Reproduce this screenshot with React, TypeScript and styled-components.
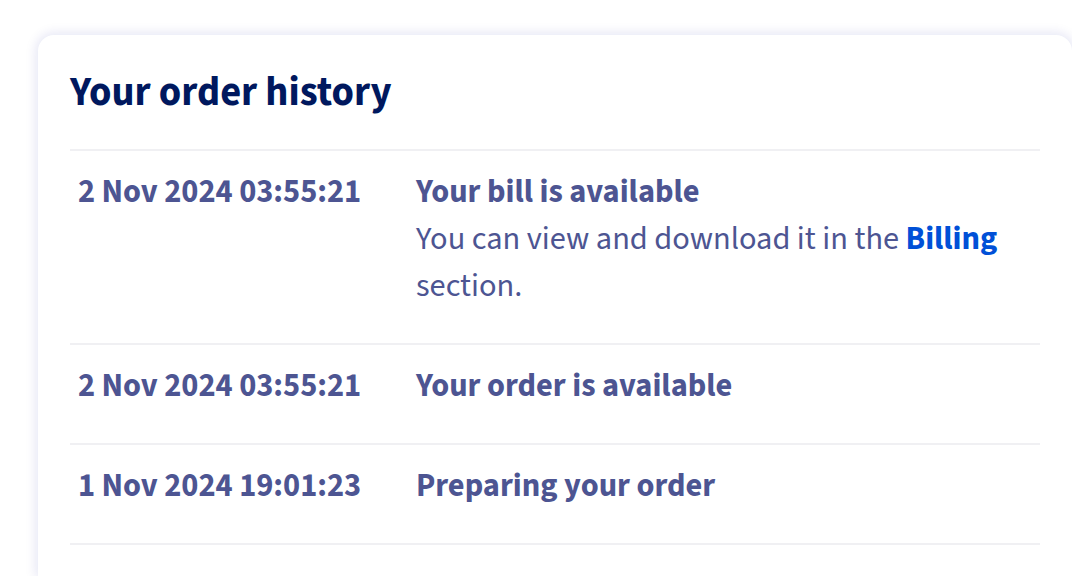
import React from "react";
import styled, { createGlobalStyle } from "styled-components";

const GlobalStyle = createGlobalStyle`
  html, body {
    margin: 0;
    padding: 0;
    background: #ffffff;
    overflow: hidden;
  }
  body {
    font-family: "Source Sans 3", "Open Sans", "Liberation Sans", sans-serif;
    -webkit-font-smoothing: antialiased;
  }
`;

const Page = styled.div`
  padding: 35px 0 0 38px;
  height: 576px;
  box-sizing: border-box;
`;

const Card = styled.section`
  width: 1034px;
  height: 100%;
  box-sizing: border-box;
  background: #ffffff;
  border-radius: 16px 16px 0 0;
  box-shadow: 0 0 12px 2px rgba(0, 14, 156, 0.11);
  padding: 34px 32px 0 32px;
`;

const Title = styled.h2`
  margin: 0 0 32px 0;
  font-size: 40.5px;
  line-height: 48px;
  font-weight: 700;
  color: #00185e;
`;

const List = styled.ul`
  list-style: none;
  margin: 0;
  padding: 0;
  border-top: 2px solid #f0f0f3;
`;

const Row = styled.li`
  display: grid;
  grid-template-columns: 338px 1fr;
  padding: 18px 0 33px 0;
  border-bottom: 2px solid #f0f0f3;
  font-size: 32.4px;
  line-height: 47px;
  color: #4d5592;
`;

const DateCell = styled.div`
  padding: 0 8px;
  font-weight: 700;
  white-space: nowrap;
`;

const Content = styled.div`
  padding: 0 8px;
`;

const EventTitle = styled.div`
  font-weight: 700;
`;

const Description = styled.p`
  margin: 0;
  font-weight: 400;
`;

const Link = styled.a`
  color: #0050d7;
  font-weight: 700;
  text-decoration: none;
`;

type Event = {
  date: string;
  title: string;
  description?: React.ReactNode;
};

const events: Event[] = [
  {
    date: "2 Nov 2024 03:55:21",
    title: "Your bill is available",
    description: (
      <>
        You can view and download it in the <Link href="#">Billing</Link> section.
      </>
    ),
  },
  { date: "2 Nov 2024 03:55:21", title: "Your order is available" },
  { date: "1 Nov 2024 19:01:23", title: "Preparing your order" },
];

export default function App() {
  return (
    <>
      <GlobalStyle />
      <Page>
        <Card>
          <Title>Your order history</Title>
          <List>
            {events.map((e, i) => (
              <Row key={i}>
                <DateCell>{e.date}</DateCell>
                <Content>
                  <EventTitle>{e.title}</EventTitle>
                  {e.description && <Description>{e.description}</Description>}
                </Content>
              </Row>
            ))}
          </List>
        </Card>
      </Page>
    </>
  );
}
